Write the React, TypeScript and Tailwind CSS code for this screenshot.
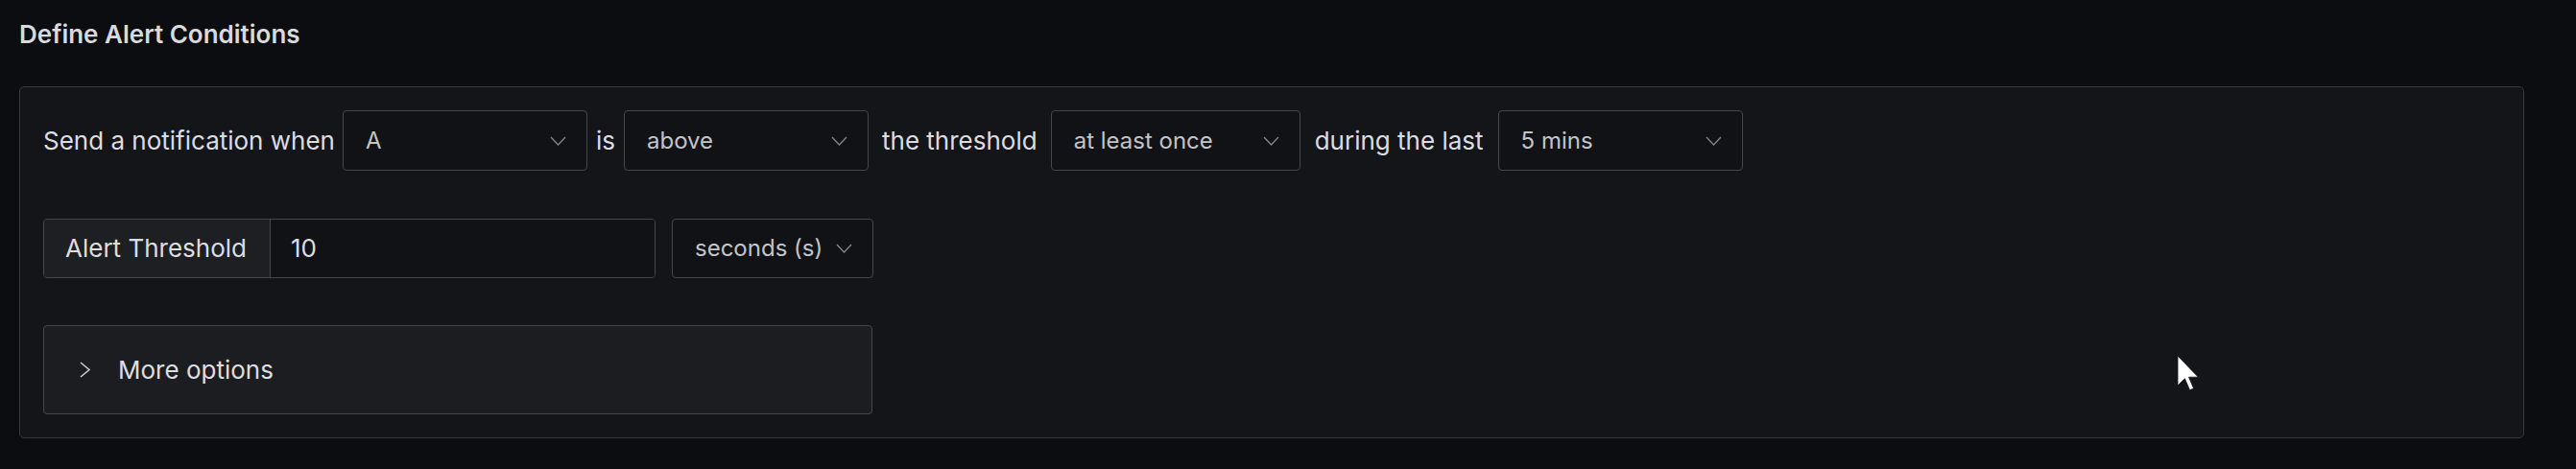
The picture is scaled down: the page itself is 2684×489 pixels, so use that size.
import type { ReactNode } from "react";

function Chevron() {
  return (
    <svg width="17" height="10" viewBox="0 0 17 10" fill="none" className="shrink-0">
      <polyline points="1,1 8.5,9 16,1" stroke="#85868c" strokeWidth="1.3" fill="none" />
    </svg>
  );
}

function Select({ value, className }: { value: string; className: string }) {
  return (
    <div
      className={`flex items-center justify-between rounded-[4px] border border-[#46474d] bg-[#111216] pl-[23px] pr-[21px] text-[24px] text-[#c3c4c9] ${className}`}
    >
      <span>{value}</span>
      <Chevron />
    </div>
  );
}

function Label({ children }: { children: ReactNode }) {
  return <span className="whitespace-nowrap text-[#dcdde1]">{children}</span>;
}

function Cursor() {
  return (
    <svg
      width="24"
      height="38"
      viewBox="0 0 12 19"
      className="pointer-events-none absolute left-[2268px] top-[370px]"
    >
      <path d="M0.5 0.5 L0.5 16 L4.2 12.4 L6.8 18.4 L8.8 17.5 L6.3 11.6 L11.2 11.6 Z" fill="#ffffff" stroke="#111" strokeWidth="0.4" />
    </svg>
  );
}

export default function App() {
  return (
    <div
      className="relative h-[489px] w-full bg-[#0c0d10] pl-5 pr-[54px] pt-5 text-[26px] leading-[32px]"
      style={{ fontFamily: "Inter, 'Noto Sans', sans-serif" }}
    >
      <h2 className="font-semibold text-[#d9dadd]">Define Alert Conditions</h2>

      <div className="mt-[38px] rounded-[5px] border border-[#38393e] bg-[#141519] px-[24px] pb-[24px] pt-[24px]">
        <div className="flex items-center">
          <Label>Send a notification when</Label>
          <Select value="A" className="ml-[8px] h-[63px] w-[255px]" />
          <span className="ml-[9px]">
            <Label>is</Label>
          </span>
          <Select value="above" className="ml-[9px] h-[63px] w-[255px]" />
          <span className="ml-[14px]">
            <Label>the threshold</Label>
          </span>
          <Select value="at least once" className="ml-[14px] h-[63px] w-[260px]" />
          <span className="ml-[15px]">
            <Label>during the last</Label>
          </span>
          <Select value="5 mins" className="ml-[15px] h-[63px] w-[255px]" />
        </div>

        <div className="mt-[50px] flex items-center">
          <div className="flex h-[62px] items-stretch overflow-hidden rounded-[4px] border border-[#46474d]">
            <div className="flex w-[236px] items-center border-r border-[#46474d] bg-[#1e1f23] px-[22px] text-[#dcdde1]">
              Alert Threshold
            </div>
            <div className="flex w-[400px] items-center bg-[#111216] px-[21px] text-[#dcdde1]">10</div>
          </div>
          <div className="ml-[17px] flex h-[62px] items-center gap-[14px] rounded-[4px] border border-[#46474d] bg-[#111216] pl-[23px] pr-[21px] text-[24px] text-[#c3c4c9]">
            <span>seconds (s)</span>
            <Chevron />
          </div>
        </div>

        <div className="mt-[49px] flex h-[93px] w-[864px] items-center rounded-[4px] border border-[#46474d] bg-[#1c1d21] pl-[36px] text-[#dcdde1]">
          <svg width="13" height="17" viewBox="0 0 13 17" fill="none" className="shrink-0">
            <polyline points="2,1 11,8.5 2,16" stroke="#c9cacf" strokeWidth="1.6" fill="none" />
          </svg>
          <span className="ml-[28px]">More options</span>
        </div>
      </div>

      <Cursor />
    </div>
  );
}
